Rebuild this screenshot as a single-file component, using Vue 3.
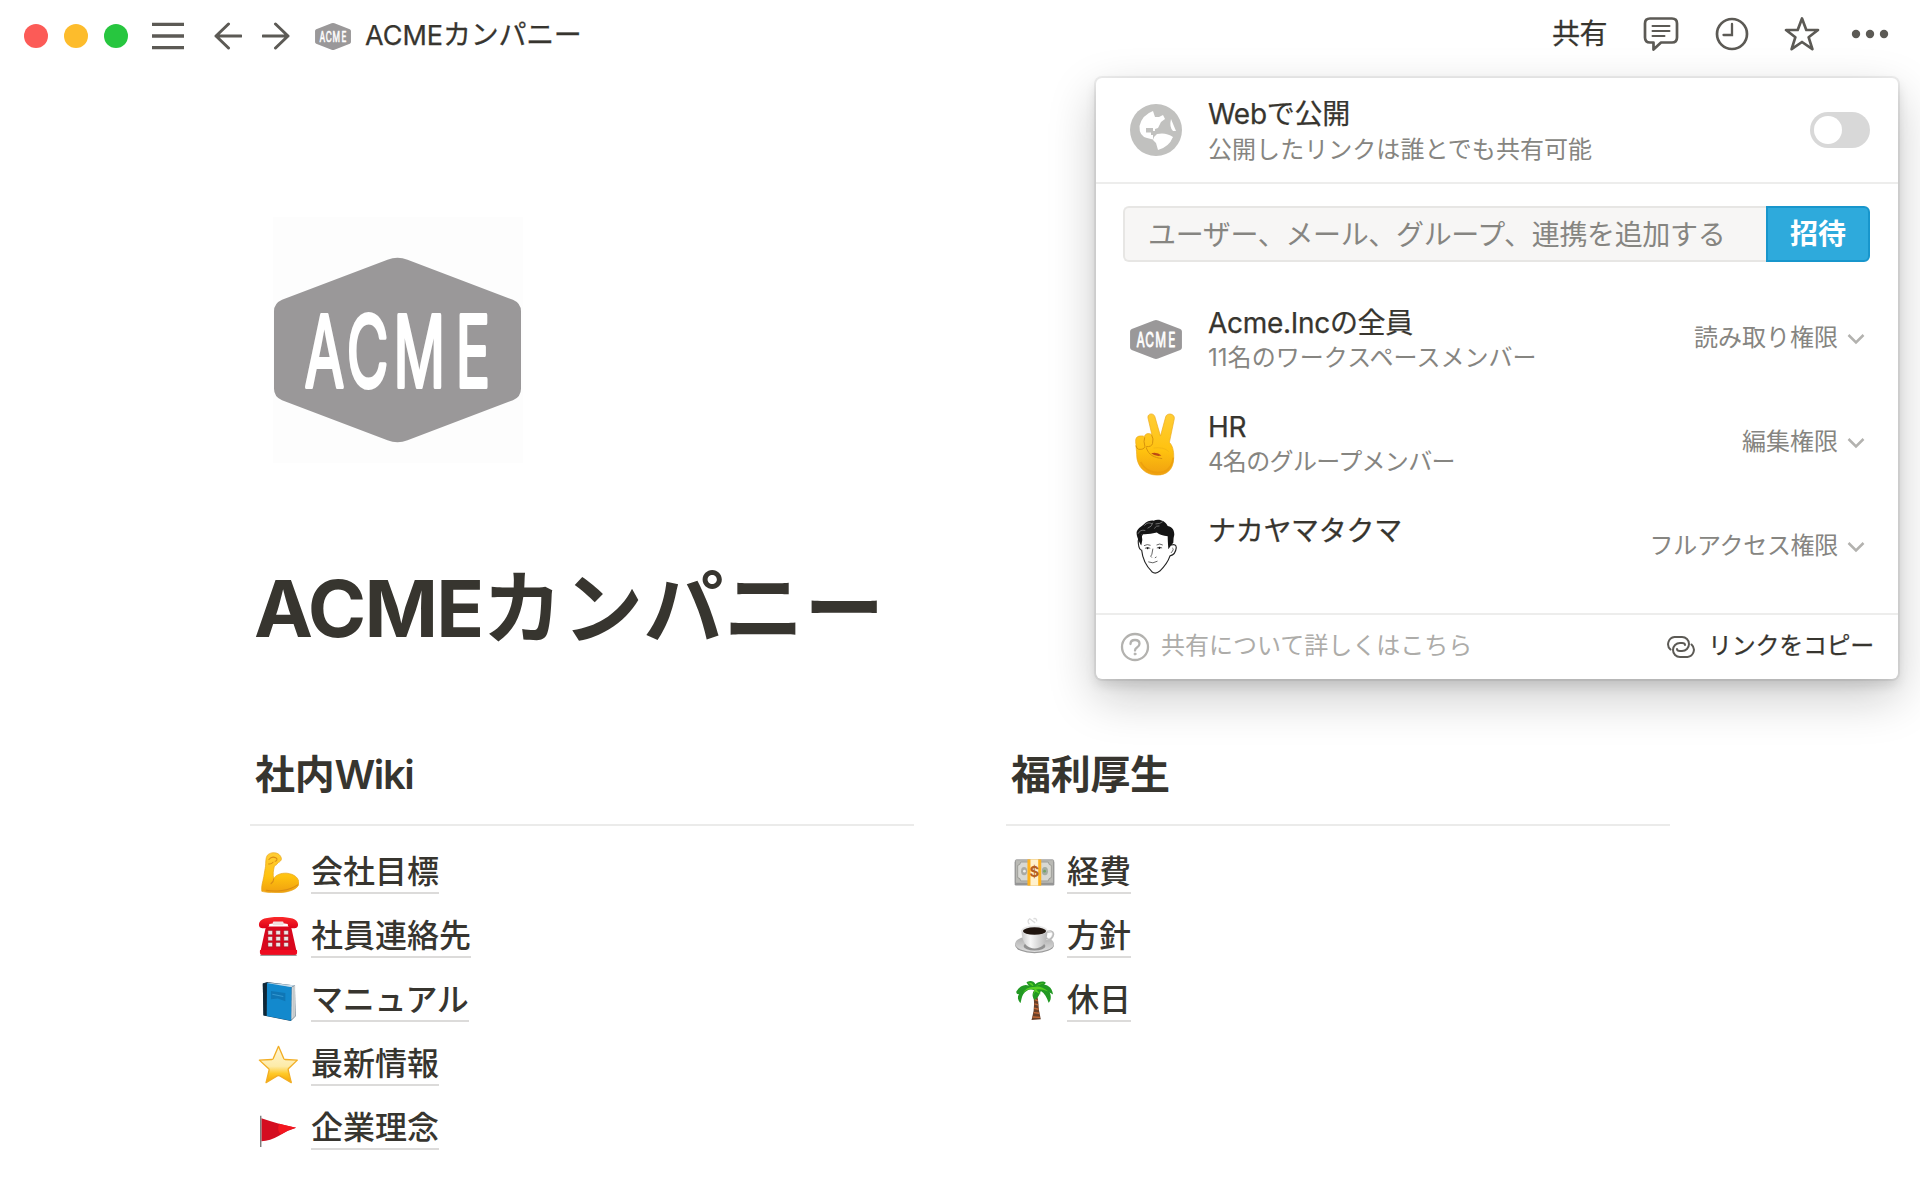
<script setup>
import { h } from 'vue'

const AcmeLogo = () =>
  h('svg', { viewBox: '0 0 246 185' }, [
    h('path', {
      d: 'M113 2.500Q123 -1.500 133 2.500L238 42.500Q246 46 246 54V131Q246 139 238 142.500L133 182.500Q123 186.500 113 182.500L8 142.500Q0 139 0 131V54Q0 46 8 42.500Z',
      fill: '#9a9899',
    }),
    h(
      'text',
      {
        x: '53 125 205 312',
        y: 129,
        transform: 'scale(0.58 1)',
        'font-family': "Inter, 'Liberation Sans', sans-serif",
        'font-size': 98,
        'font-weight': 400,
        fill: '#fff',
        stroke: '#fff',
        'stroke-width': 4,
        'stroke-linejoin': 'round',
      },
      'ACME',
    ),
  ])

const columns = [
  {
    title: '社内',
    latin: 'Wiki',
    items: [
      { icon: 'muscle', label: '会社目標' },
      { icon: 'phone', label: '社員連絡先' },
      { icon: 'book', label: 'マニュアル', tight: true },
      { icon: 'star', label: '最新情報' },
      { icon: 'flag', label: '企業理念' },
    ],
  },
  {
    title: '福利厚生',
    latin: '',
    items: [
      { icon: 'money', label: '経費' },
      { icon: 'coffee', label: '方針' },
      { icon: 'palm', label: '休日' },
    ],
  },
]

const members = [
  { icon: 'acme', name: 'Acme.Incの全員', detail: '11名のワークスペースメンバー', access: '読み取り権限' },
  { icon: 'peace', name: 'HR', detail: '4名のグループメンバー', access: '編集権限', narrow: true },
  { icon: 'face', name: 'ナカヤマタクマ', detail: '', access: 'フルアクセス権限', kana: true },
]
</script>

<template>
  <div class="page">
    <svg class="sprite" width="0" height="0" aria-hidden="true">
      <defs>
        <linearGradient id="gSkin" x1="0" y1="0" x2="0" y2="1">
          <stop offset="0" stop-color="#ffcd35" /><stop offset="0.6" stop-color="#ffc20f" /><stop offset="1" stop-color="#f0a010" />
        </linearGradient>
        <linearGradient id="gRed" x1="0" y1="0" x2="0" y2="1">
          <stop offset="0" stop-color="#fb2a2a" /><stop offset="1" stop-color="#dd0018" />
        </linearGradient>
        <linearGradient id="gStar" x1="0" y1="0" x2="0" y2="1">
          <stop offset="0" stop-color="#fff6d8" /><stop offset="0.55" stop-color="#fdeba8" /><stop offset="0.75" stop-color="#ffc928" /><stop offset="1" stop-color="#f5a400" />
        </linearGradient>
        <linearGradient id="gCup" x1="0" y1="0" x2="1" y2="0">
          <stop offset="0" stop-color="#c9c9c9" /><stop offset="0.35" stop-color="#f7f7f7" /><stop offset="1" stop-color="#b5b5b5" />
        </linearGradient>
        <linearGradient id="gSaucer" x1="0" y1="0" x2="0" y2="1">
          <stop offset="0" stop-color="#aaaaaa" /><stop offset="1" stop-color="#dedede" />
        </linearGradient>
      </defs>

      <symbol id="muscle" viewBox="0 0 120 120">
        <path d="M11 115C9 100 14 88 17 72C19 58 21 50 22 42C23 30 22 18 27 10C34 2 47 0 56 4C65 8 70 17 68 23C66 28 61 30 58 32C56 37 51 39 48 41C45 54 43 64 46 78C51 67 68 61 84 62C106 64 120 76 120 92C118 108 92 118 62 119C40 120 22 118 11 115Z" fill="url(#gSkin)" stroke="#e7a51b" stroke-width="2" />
        <path d="M46 78C46 84 42 90 38 93M32 22C38 14 46 14 52 17C58 20 56 26 50 27M44 30C40 35 36 36 31 35M24 112C50 117 90 114 116 96" fill="none" stroke="#d98c14" stroke-width="3" stroke-linecap="round" />
      </symbol>

      <symbol id="phone" viewBox="0 0 124 124">
        <path d="M24 32H100L116 104H8Z" fill="#d9071d" />
        <path d="M6 103Q4 118 12 118H112Q120 118 118 103Z" fill="#ef0b20" />
        <path d="M7 119H117" stroke="#8a8a8a" stroke-width="3" />
        <path d="M3 24C5 9 25 3 62 3C99 3 119 9 121 24C122 34 116 37 108 37C96 37 90 34 90 24Q62 19 34 24C34 34 28 37 16 37C8 37 2 34 3 24Z" fill="url(#gRed)" />
        <rect x="45" y="17" width="32" height="11" rx="3" fill="#f1dede" />
        <g fill="#eee4e4" stroke="#8c1220" stroke-width="1.500">
          <rect v-for="n in 9" :key="n" :x="30 + ((n - 1) % 3) * 24" :y="44 + Math.floor((n - 1) / 3) * 18" width="14" height="13" rx="2" />
        </g>
      </symbol>

      <symbol id="book" viewBox="0 0 120 120">
        <path d="M14 10L26 6L108 16L110 106L96 120L16 104Z" fill="#1d3d55" />
        <path d="M98 22L109 15V106L97 117Z" fill="#d9dcde" />
        <path d="M103 18V112M106 17V108" stroke="#9aa0a4" stroke-width="1" />
        <path d="M29 8L107 15L97 22L27 13Z" fill="#c6dbe9" />
        <path d="M26 9L98 21L97 119L25 105Z" fill="#1389cd" />
        <path d="M14 10L26 9L25 105L16 103Z" fill="#0f2737" />
        <path d="M38 32L80 38V62L58 54L38 56Z" fill="#0f76b5" />
        <path d="M42 42L74 48" stroke="#3598d0" stroke-width="3" />
      </symbol>

      <symbol id="star" viewBox="0 0 122 122">
        <path d="M61 7L77 44Q78 46 81 46L117 48L91 73Q89 75 90 78L99 115L65 95Q61 93 57 95L24 115L33 78Q34 75 31 73L4 48L41 46Q44 46 45 44Z" fill="url(#gStar)" stroke="#f2ae24" stroke-width="4" stroke-linejoin="round" />
      </symbol>

      <symbol id="flag" viewBox="0 0 120 120">
        <path d="M10 30Q36 39 59 45Q86 52 112 58Q84 66 60 82Q36 96 10 97Z" fill="#d40d20" />
        <path d="M62 46Q88 52 111 58Q88 63 67 77Q54 66 62 46Z" fill="#f3161f" />
        <path d="M8 23V114" stroke="#777" stroke-width="4" />
      </symbol>

      <symbol id="coffee" viewBox="0 0 120 120">
        <ellipse cx="60" cy="85" rx="57" ry="24" fill="#9b9b9b" />
        <ellipse cx="60" cy="81" rx="57" ry="24" fill="url(#gSaucer)" />
        <ellipse cx="60" cy="88" rx="32" ry="13" fill="#919191" />
        <path d="M94 48Q114 40 115 53Q113 72 88 72" fill="none" stroke="#bbb" stroke-width="6" />
        <path d="M94 48Q112 42 112 53Q110 67 88 70" fill="none" stroke="#efefef" stroke-width="2" />
        <path d="M22 42Q22 70 35 85Q46 95 60 95Q75 95 86 85Q98 70 98 42Z" fill="url(#gCup)" />
        <ellipse cx="60" cy="42" rx="38" ry="14" fill="#e8e8e8" />
        <ellipse cx="60" cy="44" rx="34" ry="11" fill="#20150f" />
        <path d="M45 24Q37 14 46 8Q55 15 62 20M57 8Q68 5 66 16" fill="none" stroke="#ddd" stroke-width="4" />
      </symbol>

      <symbol id="palm" viewBox="0 0 120 122">
        <path d="M56 34Q69 36 71 63Q72 91 79 117L51 119Q61 87 58 59Z" fill="#694029" />
        <path d="M61 48H69M60 58L70 62M60 71L71 74M59 84L72 87M58 97L74 99M55 110L76 111" stroke="#c66a37" stroke-width="4" />
        <path d="M60 31C47 24 34 31 26 43C21 51 21 62 18 69C10 60 8 51 14 42C8 43 5 39 6 34C17 17 31 12 43 17C37 8 34 7 39 5C50 1 58 4 63 13C70 4 87 2 94 8L89 14C104 15 114 28 115 43L105 37C111 49 109 61 102 68C97 52 90 40 79 33C75 44 70 54 60 60C53 49 52 39 60 31Z" fill="#229923" />
        <path d="M61 29Q42 22 25 39Q37 19 58 21Q77 14 101 34Q80 25 65 28L80 43L62 34L54 50ZM64 18Q76 7 89 10Q77 13 64 18ZM54 18Q45 11 41 8Q55 7 57 18Z" fill="#57cf23" />
      </symbol>

      <symbol id="peace" viewBox="0 0 130 195">
        <path d="M42 16C41 3 59 1 63 13L80 72L96 13C100 1 123 3 122 19L107 91C116 100 121 116 120 138C120 174 98 190 70 190C34 190 8 165 8 128C8 116 6 108 6 98C4 84 4 74 17 72C25 71 29 71 32 75C31 65 45 61 54 68Z" fill="url(#gSkin)" stroke="#eba81d" stroke-width="2" />
        <path d="M32 77Q28 88 33 103Q31 114 14 112Q7 109 6 102M54 70Q60 79 56 95Q53 105 38 104M37 107C44 130 61 137 84 140" fill="none" stroke="#d6920d" stroke-width="3" stroke-linecap="round" />
        <path d="M60 108Q90 104 104 118" fill="none" stroke="#eeae14" stroke-width="2" stroke-linecap="round" />
        <path d="M52 124Q70 119 83 131Q67 136 52 124Z" fill="#bd4a13" />
        <path d="M20 151Q43 191 90 180Q114 171 119 137" fill="none" stroke="#e99a0c" stroke-width="5" opacity="0.700" />
      </symbol>

      <symbol id="face" viewBox="0 0 130 176">
        <path d="M17 59Q8 60 10 78Q12 96 20 98C23 128 38 150 51 163Q62 172 75 161Q98 139 106 115Q123 111 125 90Q125 78 110 82L101 49L65 36L23 48Z" fill="#fff" stroke="#242424" stroke-width="3.500" />
        <path d="M18 83C7 62 0 44 8 36C13 27 22 25 26 20C37 8 49 7 56 8C72 1 91 8 99 24C115 28 119 38 119 51Q116 60 116 75L110 82L101 95Q99 69 99 55Q78 54 66 44Q41 51 20 49Q24 64 19 83Z" fill="#151515" />
        <path d="M9 48Q15 34 31 38M28 23Q39 10 52 18M38 31Q51 27 54 14M62 18Q77 18 84 11M58 32Q64 22 74 24" fill="none" stroke="#999" stroke-width="2" />
        <path d="M27 84Q37 78 47 83M65 82Q75 76 84 82M30 92Q38 87 46 92M66 91Q74 86 82 91M54 93L51 110Q44 117 51 120M60 121L65 118M40 133Q54 140 68 131M113 91Q120 94 109 106" fill="none" stroke="#444" stroke-width="2.500" />
        <circle cx="38" cy="92" r="3" fill="#111" /><circle cx="74" cy="91" r="3" fill="#111" />
      </symbol>
    </svg>

    <header class="topbar">
      <div class="lights"><i class="red"></i><i class="yellow"></i><i class="green"></i></div>
      <svg class="menu" width="32" height="28" viewBox="0 0 32 28"><path d="M0 2.300H32M0 14H32M0 25.700H32" /></svg>
      <svg class="back" width="28" height="28" viewBox="0 0 28 28"><path d="M14.500 2L2 14L14.500 26M2 14H27" /></svg>
      <svg class="forward" width="28" height="28" viewBox="0 0 28 28"><path d="M13.500 2L26 14L13.500 26M26 14H1" /></svg>
      <AcmeLogo class="crumb-logo" />
      <span class="crumb">ACME<span>カンパニー</span></span>
      <div class="actions">
        <span class="share">共有</span>
        <svg class="a-comment" width="36" height="36" viewBox="0 0 36 36">
          <path d="M7 2.500H29Q34 2.500 34 7.500V21.500Q34 26.500 29 26.500H18L10.500 33.500V26.500H7Q2 26.500 2 21.500V7.500Q2 2.500 7 2.500Z" />
          <path class="thin" d="M9.500 10H26.500M9.500 15H26.500M9.500 20H21.500" />
        </svg>
        <svg class="a-clock" width="34" height="34" viewBox="0 0 34 34"><circle cx="17" cy="17" r="15" /><path class="mid" d="M17 7V18H8.500" /></svg>
        <svg class="a-star" width="36" height="36" viewBox="0 0 36 36"><path d="M18 2.500L22.300 14H34L24.600 21.200L28.400 33.200L18 26L7.600 33.200L11.400 21.200L2 14H13.700Z" /></svg>
        <svg class="a-more" width="38" height="10" viewBox="0 0 38 10"><g><circle cx="5" cy="5" r="4.200" /><circle cx="19" cy="5" r="4.200" /><circle cx="33" cy="5" r="4.200" /></g></svg>
      </div>
    </header>

    <main class="content">
      <div class="cover"><AcmeLogo class="cover-logo" /></div>
      <h1>ACME<span>カンパニー</span></h1>
      <div class="columns">
        <section v-for="column in columns" :key="column.title" class="column">
          <h2>{{ column.title }}<span>{{ column.latin }}</span></h2>
          <ul>
            <li v-for="item in column.items" :key="item.label">
              <svg v-if="item.icon === 'money'" class="emoji" viewBox="0 0 122 120">
                <rect x="2" y="26" width="118" height="73" rx="4" fill="#969696" />
                <rect x="4" y="22" width="114" height="70" rx="3" fill="#b9b9b4" stroke="#8c8c8c" stroke-width="2" />
                <path d="M20 29H102Q103 38 111 39V75Q103 76 102 85H20Q19 76 11 75V39Q19 38 20 29Z" fill="#d8d8d3" stroke="#8c8c86" stroke-width="2" />
                <ellipse cx="30" cy="56" rx="9" ry="12" fill="#aaaaa5" />
                <ellipse cx="92" cy="56" rx="9" ry="12" fill="#a4aca2" />
                <circle cx="31" cy="56" r="4" fill="#ededed" /><circle cx="91" cy="56" r="4" fill="#74a269" />
                <rect x="40" y="21" width="41" height="78" fill="#ffb21d" />
                <rect x="49" y="21" width="23" height="78" fill="#fff1cd" />
                <text x="60.500" y="73" text-anchor="middle" font-family="Inter, sans-serif" font-size="44" font-weight="700" fill="#b66022">$</text>
              </svg>
              <svg v-else class="emoji"><use :href="'#' + item.icon" /></svg>
              <a :class="{ tight: item.tight }">{{ item.label }}</a>
            </li>
          </ul>
        </section>
      </div>
    </main>

    <aside class="popover">
      <div class="publish">
        <svg class="globe" width="52" height="52" viewBox="0 0 52 52">
          <circle cx="26" cy="26" r="26" fill="#c1c1bf" />
          <path d="M23 7Q12 11 9.500 22Q9 32 17 34L23 35.500V31H21V28.500H16V24H23V27H25V25L28 24L31 18L35 15L33 11L29 13H25ZM41 15L46 27H43Q39 23 41 15ZM27 30Q36 28 43 33Q39 43 28 46L26 39L23 36Q24 32 27 30Z" fill="#fff" />
        </svg>
        <div class="lines">
          <div class="title">Webで公開</div>
          <div class="sub">公開したリンクは誰とでも共有可能</div>
        </div>
        <div class="toggle"><i></i></div>
      </div>
      <div class="invite">
        <div class="field">ユーザー、メール、グループ、連携を追加する</div>
        <div class="button">招待</div>
      </div>
      <div class="members">
        <div v-for="member in members" :key="member.name" class="member">
          <div class="avatar">
            <AcmeLogo v-if="member.icon === 'acme'" class="acme" />
            <svg v-else :class="member.icon"><use :href="'#' + member.icon" /></svg>
          </div>
          <div class="lines">
            <div class="title">{{ member.name }}</div>
            <div class="sub" :class="{ narrow: member.narrow }">{{ member.detail }}</div>
          </div>
          <div class="access" :class="{ kana: member.kana }">{{ member.access }}</div>
          <svg class="chevron" width="18" height="12" viewBox="0 0 18 12"><path d="M1.500 2L9 9.500L16.500 2" /></svg>
        </div>
      </div>
      <footer>
        <svg class="help" width="30" height="30" viewBox="0 0 30 30">
          <circle cx="15" cy="15" r="13" /><path d="M10.500 12Q10.500 8 15 8Q19.500 8 19.500 11.700Q19.500 14 17 15.500Q15 16.700 15 18.500" /><circle class="dot" cx="15" cy="22" r="1" />
        </svg>
        <span class="learn">共有について詳しくはこちら</span>
        <svg class="link" width="30" height="24" viewBox="0 0 30 24">
          <path d="M4.500 14.500A7.200 7.200 0 0 1 8.500 2H16A7 7 0 0 1 16 16H14Q11 16 11 14M25.500 9.500A7.200 7.200 0 0 1 21.500 22H14A7 7 0 0 1 14 8H16Q19 8 19 10" />
        </svg>
        <span class="copy">リンクをコピー</span>
      </footer>
    </aside>
  </div>
</template>

<style>
body { background: #fff; }
</style>

<style scoped>
.page {
  position: relative;
  width: 1920px;
  height: 1200px;
  overflow: hidden;
  background: #fff;
  color: #37352f;
  font-family: Inter, "Noto Sans CJK JP", sans-serif;
  white-space: nowrap;
}
.sprite { position: absolute; }
svg { flex: none; display: block; }

.topbar { display: flex; align-items: center; height: 72px; padding-left: 24px; }
.lights { display: flex; gap: 16px; margin-right: 24px; }
.lights i { width: 24px; height: 24px; border-radius: 50%; }
.red { background: #fc5b57; }
.yellow { background: #fdbc2c; }
.green { background: #27c63f; }
.menu, .back, .forward { fill: none; stroke: #5c5a55; stroke-width: 3; }
.menu { stroke-width: 3.300; }
.back, .forward { stroke-linecap: round; stroke-linejoin: round; }
.back { margin-left: 30px; }
.forward { margin-left: 20px; }
.crumb-logo { width: 36px; height: 27px; margin-left: 25px; }
.crumb { margin: -2px 0 0 14px; font-size: 27px; line-height: 40px; -webkit-text-stroke: 0.250px; }
.crumb span { font-size: 28px; letter-spacing: -0.300px; }
.actions { display: flex; align-items: center; margin-left: auto; height: 68px; margin-bottom: 4px; padding-right: 31px; }
.share { font-size: 28px; line-height: 40px; letter-spacing: -0.500px; -webkit-text-stroke: 0.250px; }
.actions svg { fill: none; stroke: #5c5a55; stroke-width: 2.700; stroke-linejoin: round; stroke-linecap: round; }
.actions .thin { stroke-width: 2; }
.actions .mid { stroke-width: 2.300; stroke-linejoin: miter; }
.actions g { fill: #5c5a55; stroke: none; }
.a-comment { margin-left: 36px; }
.a-clock { margin-left: 36px; }
.a-star { margin-left: 35px; }
.a-more { margin-left: 31px; }

.content { padding: 145px 250px 0; }
.cover { display: flex; align-items: center; justify-content: center; width: 250px; height: 246px; margin-left: 23px; background: #fdfdfd; }
.cover-logo { width: 247px; height: 186px; margin-top: 20px; margin-right: 1px; }
h1 { margin: 85px 0 0 4px; font-size: 79px; line-height: 120px; font-weight: 700; letter-spacing: -1.800px; }
h1 span { font-size: 80px; letter-spacing: 0.450px; }
.columns { display: flex; gap: 92px; margin-top: 74px; }
.column { width: 664px; }
h2 { margin: 0; height: 82px; padding-left: 5px; border-bottom: 2px solid #ebebea; font-size: 40px; line-height: 65px; font-weight: 600; letter-spacing: -0.300px; }
h2 span { letter-spacing: -1.400px; }
ul { margin: 14px 0 0; padding: 0 0 0 8px; list-style: none; }
li { display: flex; align-items: center; height: 64px; }
.emoji { width: 41px; height: 41px; margin-right: 12px; }
li a { height: 42px; border-bottom: 2px solid #dcdbda; font-size: 32px; line-height: 44px; font-weight: 500; }
li a.tight { letter-spacing: -0.300px; }

.popover {
  position: absolute;
  top: 78px;
  left: 1096px;
  width: 802px;
  height: 601px;
  border-radius: 6px;
  background: #fff;
  box-shadow: 0 0 0 2px rgba(15, 15, 15, 0.060), 0 6px 12px rgba(15, 15, 15, 0.120), 0 18px 48px rgba(15, 15, 15, 0.220);
}
.publish { display: flex; align-items: center; height: 104px; padding: 0 28px 0 34px; border-bottom: 2px solid #ededec; }
.lines { flex: 1; padding-top: 3px; }
.publish .lines { margin-left: 26px; padding-top: 4px; }
.title { font-size: 28px; line-height: 36px; letter-spacing: -0.300px; -webkit-text-stroke: 0.250px; }
.sub { height: 36px; color: #868581; font-size: 24px; line-height: 36px; letter-spacing: 0.050px; }
.member .sub { line-height: 34px; }
.sub.narrow { letter-spacing: -0.650px; }
.toggle { width: 60px; height: 36px; box-sizing: border-box; padding: 4px; border-radius: 18px; background: #d8d8d8; }
.toggle i { display: block; width: 28px; height: 28px; border-radius: 50%; background: #fff; }
.invite { display: flex; margin: 22px 28px 25px 27px; height: 56px; }
.field { flex: 1; box-sizing: border-box; padding-left: 23px; border: 2px solid #e7e6e4; border-right: 0; border-radius: 6px 0 0 6px; background: #f7f6f5; color: #868581; font-size: 28px; line-height: 54px; letter-spacing: -0.350px; }
.button { width: 104px; box-sizing: border-box; border: 2px solid #1896cc; border-radius: 0 6px 6px 0; background: #2eaadc; color: #fff; font-size: 28px; line-height: 52px; font-weight: 600; text-align: center; }
.member { display: flex; align-items: center; height: 104.200px; padding: 0 33px 0 34px; }
.avatar { display: flex; justify-content: center; width: 52px; margin-right: 26px; }
.avatar .acme { width: 52px; height: 39px; }
.avatar .peace { width: 43px; height: 65px; margin: 2px 2px 0 0; }
.avatar .face { width: 43px; height: 58px; }
.access { margin-top: -2px; color: #868581; font-size: 24px; line-height: 36px; }
.access.kana { letter-spacing: -0.300px; }
.chevron { margin-left: 9px; fill: none; stroke: #b3b2af; stroke-width: 2.500; }
footer { display: flex; align-items: center; height: 64px; margin-top: 13px; padding: 0 24px; border-top: 2px solid #ededec; }
.help { fill: none; stroke: #b3b2af; stroke-width: 2.300; stroke-linecap: round; }
.help .dot { fill: #b3b2af; stroke-width: 1; }
.learn { margin: -1px 0 0 11px; color: #adaca9; font-size: 24px; line-height: 36px; }
.link { margin-left: auto; fill: none; stroke: #5c5a55; stroke-width: 2; stroke-linecap: round; }
.copy { margin: -1px 0 0 12px; font-size: 24px; line-height: 36px; letter-spacing: -0.300px; -webkit-text-stroke: 0.250px; }
</style>
